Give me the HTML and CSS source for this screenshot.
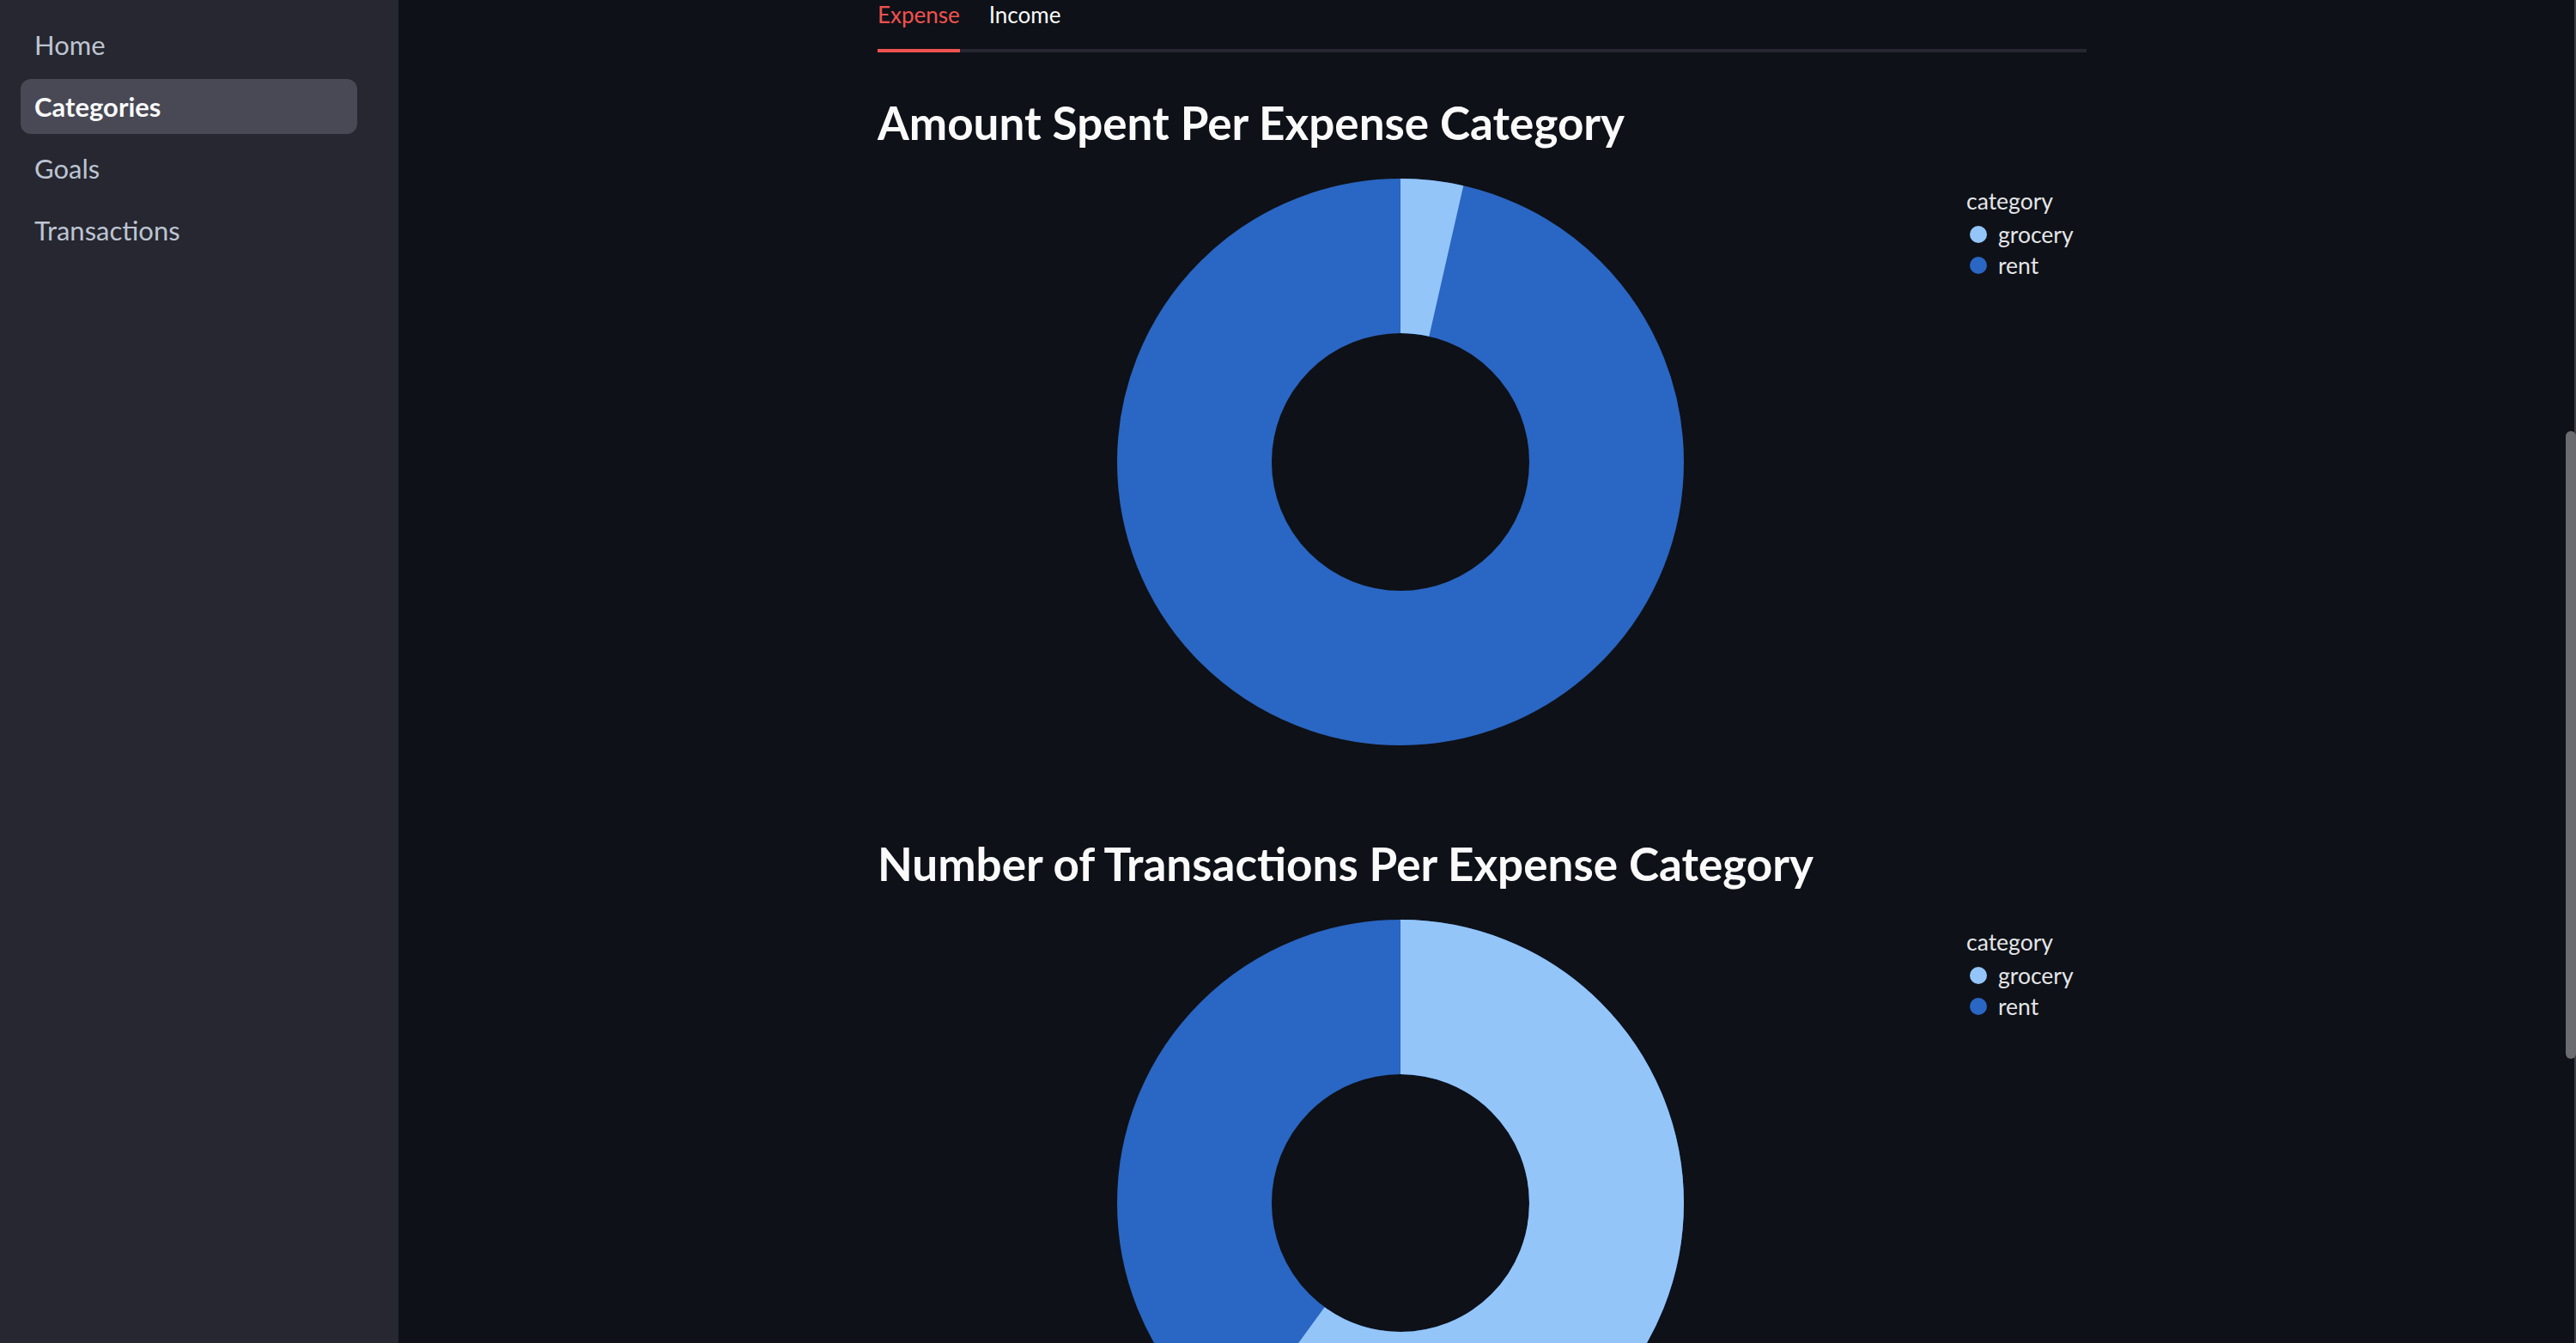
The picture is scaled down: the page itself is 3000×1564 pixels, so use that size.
FILE: index.html
```html
<!DOCTYPE html>
<html lang="en">
<head>
    <meta charset="UTF-8">
    <meta name="viewport" content="width=device-width, initial-scale=1.0">
    <title>Categories</title>
    <link rel="stylesheet" href="styles.css">
</head>
<body>
    <div class="app">
        <aside class="sidebar">
            <nav class="nav">
                <a class="nav-item">Home</a>
                <a class="nav-item active">Categories</a>
                <a class="nav-item">Goals</a>
                <a class="nav-item">Transactions</a>
            </nav>
        </aside>
        <main class="main">
            <div class="content">
                <div class="tabs">
                    <div class="tab active">Expense</div>
                    <div class="tab">Income</div>
                </div>

                <section class="chart-block">
                    <h3>Amount Spent Per Expense Category</h3>
                    <svg class="chart" width="1408" height="742" viewBox="0 0 1408 742">
                        <circle class="slice-rent" cx="609" cy="356" r="240" />
                        <circle class="slice-grocery" cx="609" cy="356" r="240" stroke-dasharray="53.8 2000" transform="rotate(-90 609 356)" />
                        <g class="legend">
                            <text class="legend-title" x="1268" y="62">category</text>
                            <circle class="dot-grocery" cx="1282" cy="91" r="10" />
                            <text x="1305" y="101">grocery</text>
                            <circle class="dot-rent" cx="1282" cy="127" r="10" />
                            <text x="1305" y="137">rent</text>
                        </g>
                    </svg>
                </section>

                <section class="chart-block">
                    <h3>Number of Transactions Per Expense Category</h3>
                    <svg class="chart" width="1408" height="742" viewBox="0 0 1408 742">
                        <circle class="slice-rent" cx="609" cy="356" r="240" />
                        <circle class="slice-grocery" cx="609" cy="356" r="240" stroke-dasharray="904.8 2000" transform="rotate(-90 609 356)" />
                        <g class="legend">
                            <text class="legend-title" x="1268" y="62">category</text>
                            <circle class="dot-grocery" cx="1282" cy="91" r="10" />
                            <text x="1305" y="101">grocery</text>
                            <circle class="dot-rent" cx="1282" cy="127" r="10" />
                            <text x="1305" y="137">rent</text>
                        </g>
                    </svg>
                </section>
            </div>
        </main>
        <div class="scrollbar"><div class="thumb"></div></div>
    </div>
</body>
</html>
```

FILE: styles.css
```css
html, body { margin: 0; padding: 0; height: 100%; overflow: hidden; }
body { background: #0e1117; color: #fafafa; font-family: Lato, "Open Sans", sans-serif; }
.app { display: flex; height: 1564px; }

.sidebar { width: 464px; flex-shrink: 0; background: #262730; }
.nav { display: flex; flex-direction: column; gap: 8px; padding: 20px 48px 0 24px; }
.nav-item { height: 64px; line-height: 64px; padding-left: 16px; border-radius: 12px; font-size: 31px; color: #bdc4d2; cursor: pointer; }
.nav-item.active { background: #484955; color: #fafafa; font-weight: 700; }

.main { flex: 1; display: flex; justify-content: center; padding-right: 12px; }
.content { width: 1408px; }

.tabs { display: flex; gap: 34px; border-bottom: 4px solid #262730; }
.tab { height: 57px; line-height: 34px; font-size: 26px; color: #fafafa; }
.tab.active { color: #f0524f; border-bottom: 4px solid #f0524f; margin-bottom: -4px; }

.chart-block { padding-top: 42px; }
.chart-block h3 { margin: 0; height: 80px; line-height: 80px; font-size: 53px; font-weight: 700; color: #fafafa; }
.chart { display: block; margin-top: -1px; }
.slice-rent { fill: none; stroke: #2a66c3; stroke-width: 180; }
.slice-grocery { fill: none; stroke: #93c5f8; stroke-width: 180; }
.legend text { font-family: Lato, sans-serif; font-size: 26.5px; fill: #e4e5e8; }
.dot-grocery { fill: #93c5f8; }
.dot-rent { fill: #2a66c3; }

.scrollbar { position: fixed; top: 0; right: 0; width: 2px; height: 1564px; background: #3d3e44; }
.thumb { position: absolute; top: 502px; right: 0; width: 12px; height: 731px; border-radius: 6px; background: #6b6c70; }
```
